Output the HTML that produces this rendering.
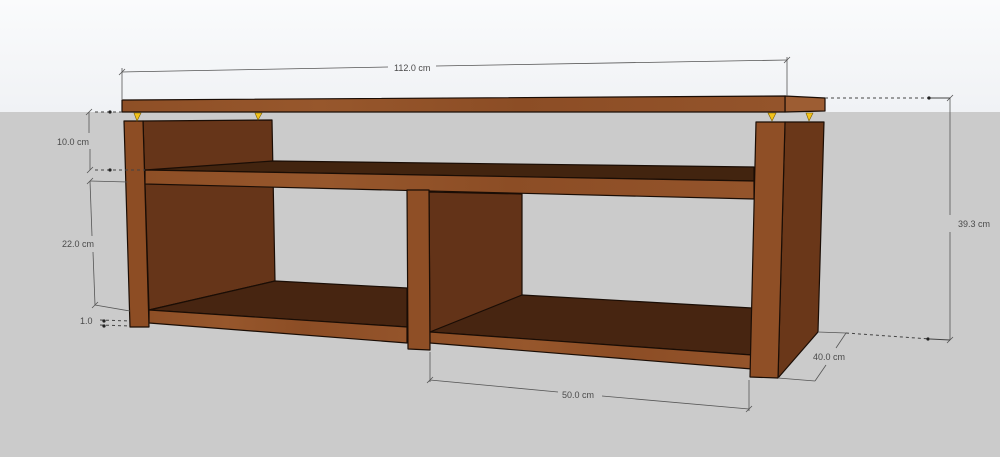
<!DOCTYPE html>
<html><head><meta charset="utf-8"><style>
html,body{margin:0;padding:0;width:1000px;height:457px;overflow:hidden;background:#cbcbcb}
svg{display:block}
text{font-family:"Liberation Sans",sans-serif;font-size:9px;fill:#4a4a4a}
</style></head><body>
<svg width="1000" height="457" viewBox="0 0 1000 457" xmlns="http://www.w3.org/2000/svg">
<defs>
<linearGradient id="sky" x1="0" y1="0" x2="0" y2="1"><stop offset="0" stop-color="#fafbfc"/><stop offset="1" stop-color="#f0f2f5"/></linearGradient>
<linearGradient id="wf" x1="0" y1="0" x2="1" y2="0">
<stop offset="0" stop-color="#8e4f26"/><stop offset="0.3" stop-color="#97572c"/><stop offset="0.6" stop-color="#8c4d25"/><stop offset="1" stop-color="#94542b"/></linearGradient>
</defs>
<rect x="0" y="0" width="1000" height="112" fill="url(#sky)"/>
<rect x="0" y="112" width="1000" height="345" fill="#cbcbcb"/>
<g stroke="#1a0d05" stroke-width="1.2" stroke-linejoin="round">
<polygon points="143,121 272,120 275,281 149,310" fill="#663519"/>
<polygon points="429,192 522,194 522,296 430,332" fill="#633318"/>
<polygon points="145,170 273,161 754,167 754,181" fill="#42240f"/>
<polygon points="145,170 754,181 754,199 145,184" fill="url(#wf)"/>
<polygon points="149,310 275,281 407,288 407,327" fill="#472511"/>
<polygon points="149,310 407,327 407,343 149,323" fill="url(#wf)"/>
<polygon points="430,332 522,295 752,308 752,355" fill="#472511"/>
<polygon points="430,332 752,355 752,369 430,343" fill="url(#wf)"/>
<polygon points="407,190 429,190 430,350 408,349" fill="#8f4f26"/>
<polygon points="124,121 143,121 149,327 130,327" fill="#8d4d24"/>
<polygon points="785,122 824,122 818,332 778,378" fill="#6a3719"/>
<polygon points="756,122 785,122 778,378 750,377" fill="#8f4f26"/>
<polygon points="785,96 825,98 825,111 785,112" fill="#9d5d33"/>
<polygon points="122,100 785,96 785,112 122,112" fill="url(#wf)"/>
</g>
<g fill="#f2c21a" stroke="#7a5a00" stroke-width="0.6">
<polygon points="134,113 141,113 137,121"/>
<polygon points="255,113 262,113 258,120"/>
<polygon points="768,113 776,113 772,121"/>
<polygon points="806,113 813,113 809,121"/>
</g>
<g stroke="#555" stroke-width="0.8" fill="none">
<line x1="122" y1="99" x2="122" y2="68"/>
<line x1="787" y1="96" x2="787" y2="57"/>
<line x1="122" y1="72" x2="388" y2="67"/>
<line x1="436" y1="66" x2="787" y2="60"/>
<line x1="119" y1="75" x2="125" y2="69"/><line x1="784" y1="63" x2="790" y2="57"/>
<line x1="89" y1="112" x2="89" y2="133"/><line x1="90" y1="149" x2="90" y2="170"/>
<line x1="90" y1="181" x2="92" y2="236"/><line x1="93" y1="252" x2="95" y2="305"/>
<line x1="90" y1="181" x2="128" y2="182"/><line x1="95" y1="305" x2="130" y2="311"/>
<line x1="86" y1="115" x2="92" y2="109"/><line x1="87" y1="173" x2="93" y2="167"/>
<line x1="87" y1="184" x2="93" y2="178"/><line x1="92" y1="308" x2="98" y2="302"/>
<line x1="950" y1="98" x2="950" y2="215"/><line x1="950" y1="232" x2="950" y2="340"/>
<line x1="947" y1="101" x2="953" y2="95"/><line x1="947" y1="343" x2="953" y2="337"/>
<line x1="818" y1="332" x2="846" y2="333"/>
<line x1="846" y1="333" x2="836" y2="348"/><line x1="826" y1="365" x2="815" y2="381"/>
<line x1="778" y1="378" x2="815" y2="381"/>
<line x1="430" y1="352" x2="430" y2="382"/><line x1="749" y1="380" x2="749" y2="411"/>
<line x1="430" y1="380" x2="558" y2="392"/><line x1="602" y1="396" x2="749" y2="409"/>
<line x1="427" y1="383" x2="433" y2="377"/><line x1="746" y1="412" x2="752" y2="406"/>
</g>
<g stroke="#444" stroke-width="1" stroke-dasharray="3,3" fill="none">
<line x1="825" y1="98" x2="930" y2="98"/><line x1="930" y1="98" x2="950" y2="98" stroke-dasharray="none"/>
<line x1="846" y1="333" x2="930" y2="339"/><line x1="930" y1="339" x2="950" y2="340" stroke-dasharray="none"/>
<line x1="95" y1="112" x2="122" y2="112"/>
<line x1="95" y1="170" x2="145" y2="170"/>
<line x1="100" y1="320" x2="130" y2="321"/><line x1="100" y1="325" x2="130" y2="326"/>
</g>
<g fill="#222"><circle cx="110" cy="112" r="1.6"/><circle cx="110" cy="170" r="1.6"/><circle cx="929" cy="98" r="1.6"/><circle cx="928" cy="339" r="1.6"/><circle cx="104" cy="321" r="1.6"/><circle cx="104" cy="326" r="1.6"/></g>
<text x="394" y="71">112.0 cm</text>
<text x="57" y="145">10.0 cm</text>
<text x="62" y="247">22.0 cm</text>
<text x="80" y="324">1.0</text>
<text x="958" y="227">39.3 cm</text>
<text x="813" y="360">40.0 cm</text>
<text x="562" y="398">50.0 cm</text>
</svg>
</body></html>
